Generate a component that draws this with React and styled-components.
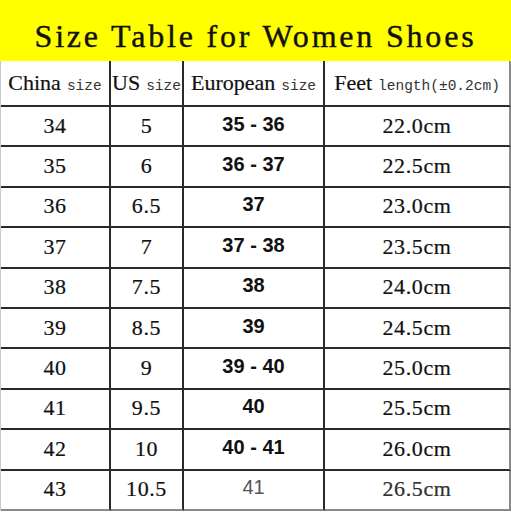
import React from 'react'
import styled, { createGlobalStyle } from 'styled-components'

const GlobalStyle = createGlobalStyle`
  html, body {
    margin: 0;
    padding: 0;
    background: #fff;
  }
`

const Page = styled.div`
  width: 511px;
  height: 512px;
  overflow: hidden;
  background: #fff;
`

const Banner = styled.div`
  height: 61px;
  box-sizing: border-box;
  padding-top: 20px;
  background: #ffff00;
  text-align: center;
  font-family: 'Liberation Serif', serif;
  font-size: 32px;
  line-height: 32px;
  letter-spacing: 2.8px;
  color: #111;
  -webkit-text-stroke: 0.4px #111;
`

const Grid = styled.div`
  width: 510px;
  display: grid;
  grid-template-columns: 110px 73px 141px 186px;
  grid-template-rows: 46px repeat(10, 40.4px);
  border-left: 1px solid #c8c8c8;
  box-sizing: border-box;
`

const Cell = styled.div`
  display: flex;
  align-items: center;
  justify-content: center;
  box-sizing: border-box;
  border-right: 2px solid ${p => (p.$edge ? '#8a8a8a' : '#2a2a2a')};
  border-bottom: 2px solid ${p => (p.$last ? '#8a8a8a' : '#2a2a2a')};
  font-family: 'Liberation Serif', serif;
  font-size: 22px;
  color: #111;
  white-space: nowrap;
  -webkit-text-stroke: 0.2px #111;
  padding-bottom: ${p => (p.$head ? '0' : '1px')};
`

const Small = styled.span`
  font-family: 'Liberation Mono', monospace;
  font-size: 14.5px;
  color: #333;
  margin-left: 6px;
  margin-top: 5px;
  -webkit-text-stroke: 0;
`

const Euro = styled.span`
  font-family: 'Liberation Sans', sans-serif;
  font-weight: ${p => (p.$faded ? 400 : 700)};
  font-size: 20px;
  color: ${p => (p.$faded ? '#555' : '#111')};
  margin-bottom: 3px;
  -webkit-text-stroke: 0;
`

const Num = styled.span`
  letter-spacing: 0.6px;
  color: ${p => (p.$faded ? '#333' : '#111')};
`

const rows = [
  ['34', '5', '35 - 36', '22.0cm'],
  ['35', '6', '36 - 37', '22.5cm'],
  ['36', '6.5', '37', '23.0cm'],
  ['37', '7', '37 - 38', '23.5cm'],
  ['38', '7.5', '38', '24.0cm'],
  ['39', '8.5', '39', '24.5cm'],
  ['40', '9', '39 - 40', '25.0cm'],
  ['41', '9.5', '40', '25.5cm'],
  ['42', '10', '40 - 41', '26.0cm'],
  ['43', '10.5', '41', '26.5cm'],
]

const headers = [
  ['China', 'size'],
  ['US', 'size'],
  ['European', 'size'],
  ['Feet', 'length(±0.2cm)'],
]

export default function App() {
  return (
    <Page>
      <GlobalStyle />
      <Banner>Size Table for Women Shoes</Banner>
      <Grid>
        {headers.map(([big, small], i) => (
          <Cell key={big} $head $edge={i === 3}>
            {big}
            <Small>{small}</Small>
          </Cell>
        ))}
        {rows.map((r, ri) => {
          const last = ri === rows.length - 1
          return (
            <React.Fragment key={r[0]}>
              <Cell $last={last}><Num>{r[0]}</Num></Cell>
              <Cell $last={last}><Num>{r[1]}</Num></Cell>
              <Cell $last={last}><Euro $faded={last}>{r[2]}</Euro></Cell>
              <Cell $last={last} $edge><Num $faded={last}>{r[3]}</Num></Cell>
            </React.Fragment>
          )
        })}
      </Grid>
    </Page>
  )
}
